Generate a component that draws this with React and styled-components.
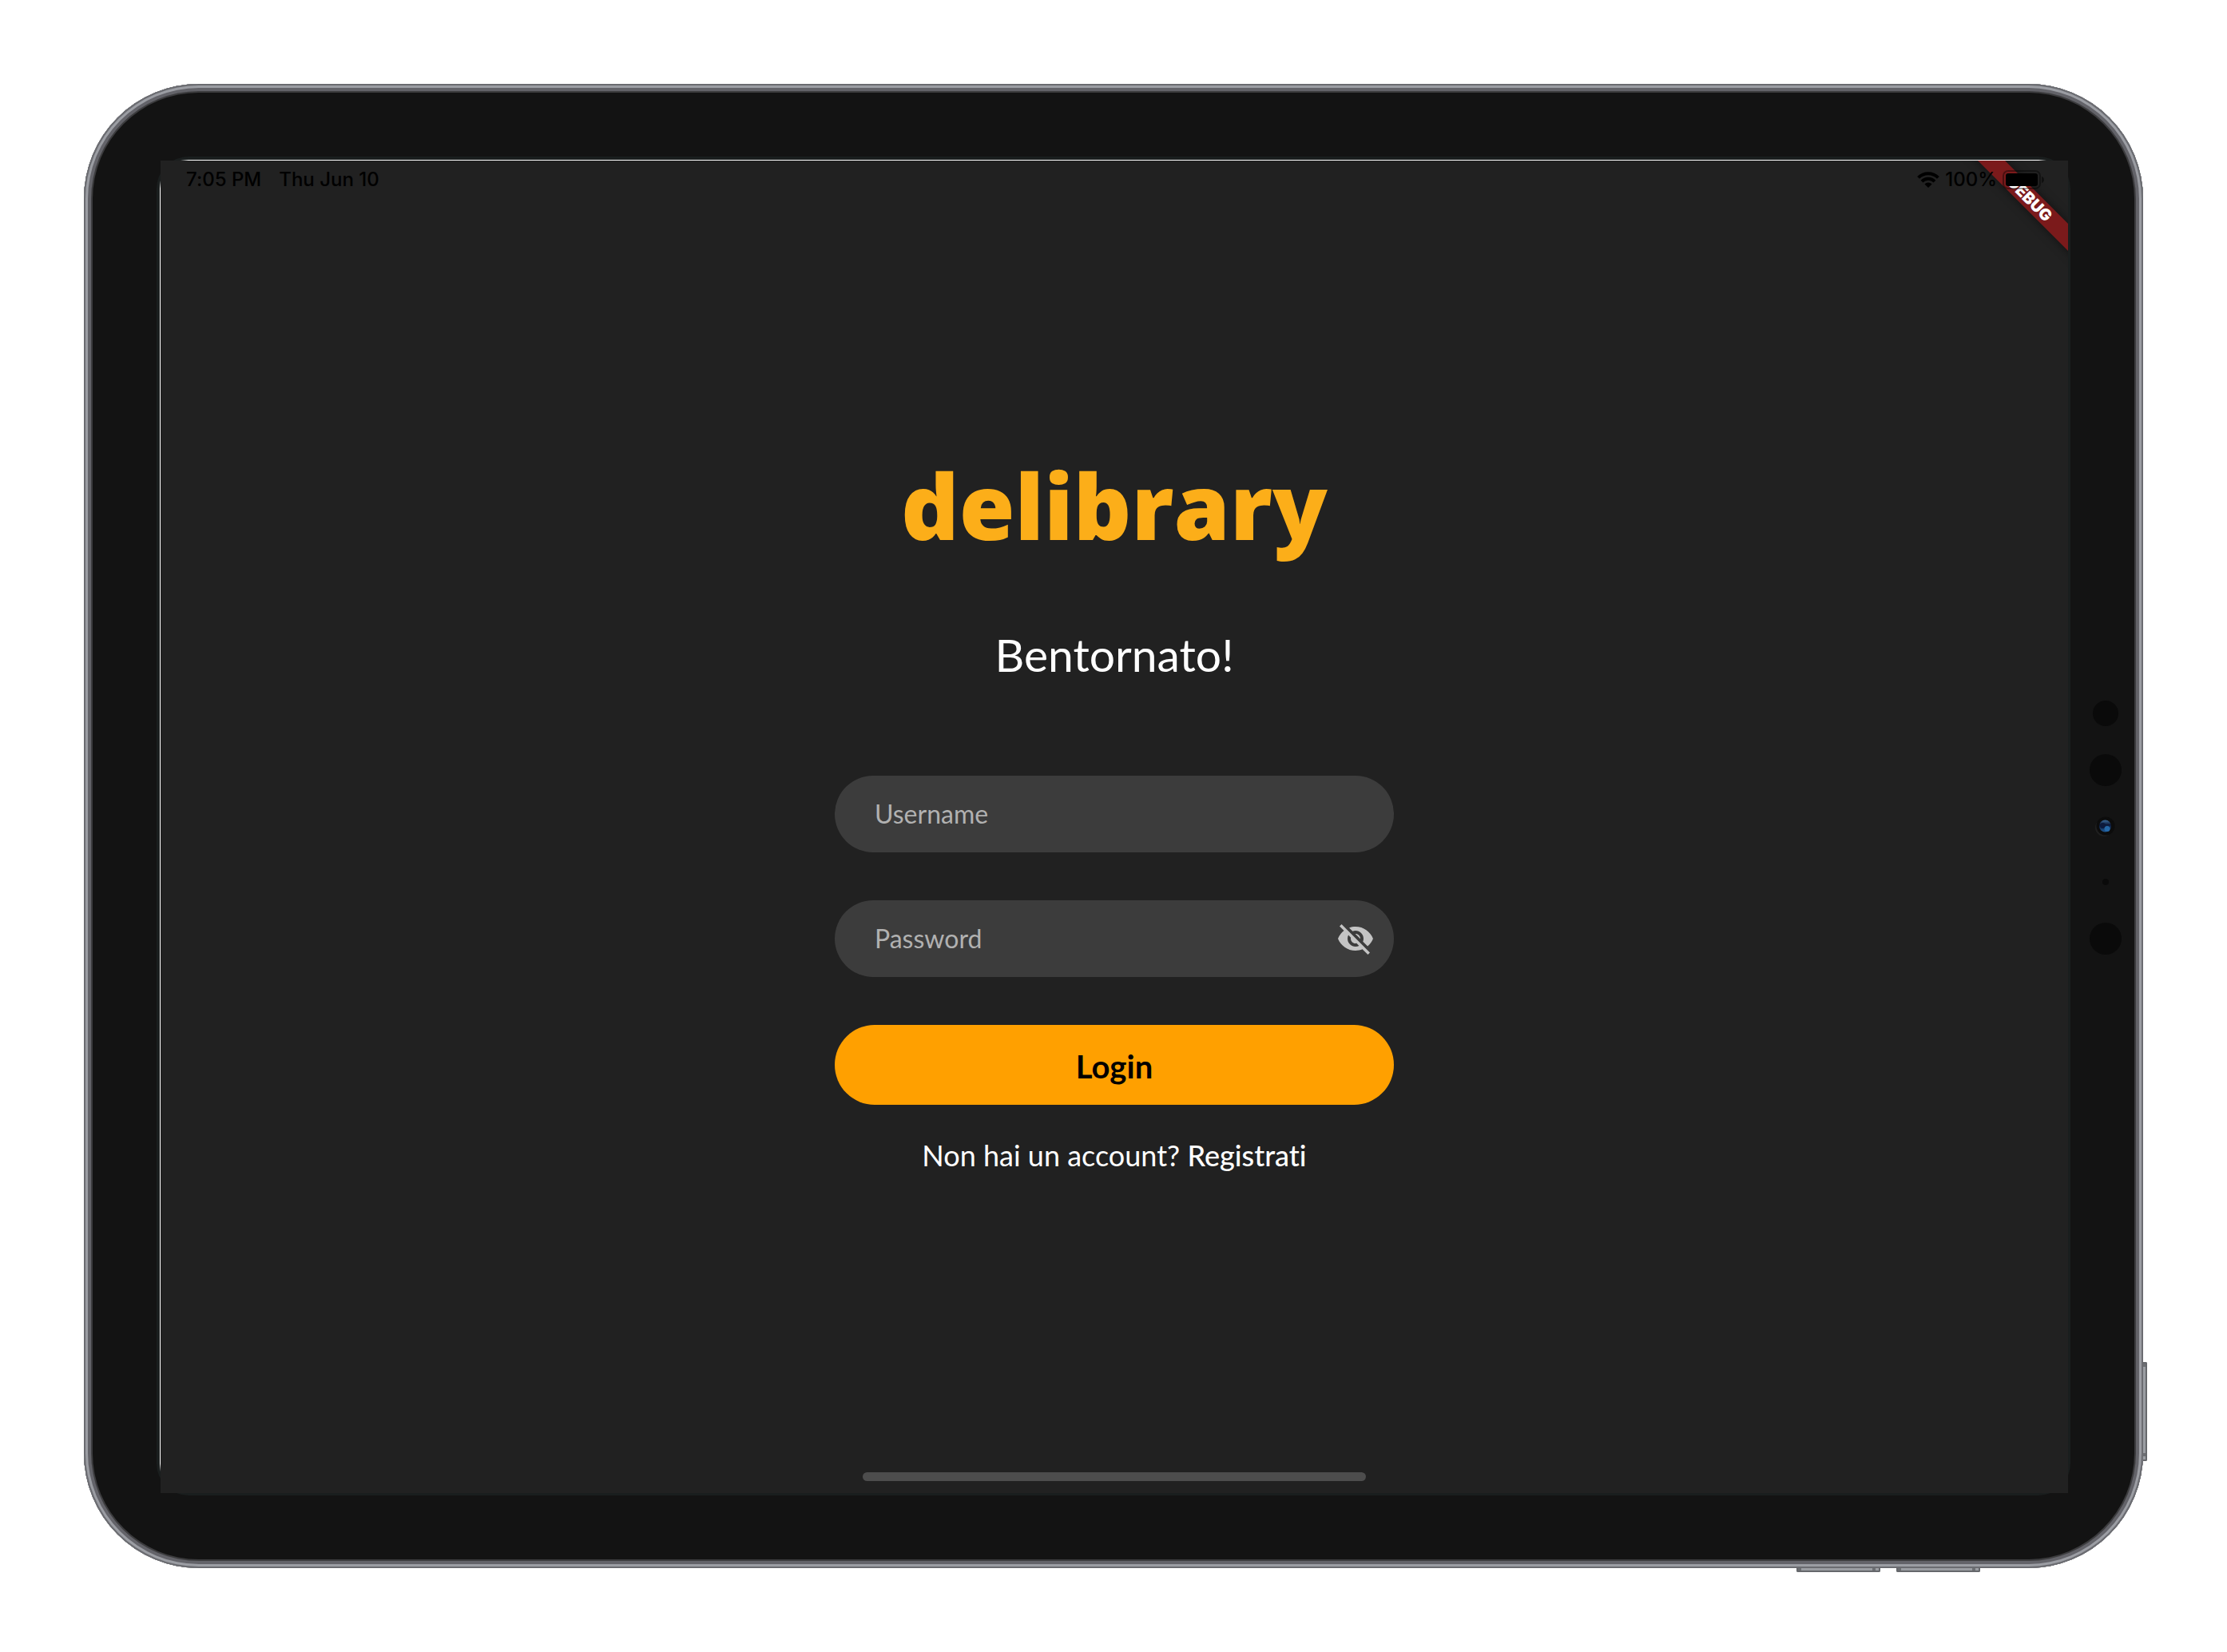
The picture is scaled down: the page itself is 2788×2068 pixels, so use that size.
import React, { useState } from "react";
import styled, { createGlobalStyle } from "styled-components";
import { MdVisibility, MdVisibilityOff } from "react-icons/md";

const GlobalStyle = createGlobalStyle`
  *, *::before, *::after { box-sizing: border-box; }
  body { margin: 0; background: #ffffff; }
  button, input { font: inherit; }
`;

const Page = styled.div`
  min-height: 100vh;
  display: flex;
  padding: 105px;
  font-family: Lato, "Liberation Sans", sans-serif;
  font-variant-ligatures: none;
`;

const Device = styled.div`
  position: relative;
  flex: 1;
  display: flex;
  padding: 91px;
  border-radius: 144px;
  background: #131313;
  box-shadow:
    inset 0 0 0 2px #6b6c71,
    inset 0 0 0 5px #9b9da3,
    inset 0 0 0 9px #636369,
    inset 0 0 0 11px #3c3c3e;
`;

const ScreenRing = styled.div`
  position: relative;
  flex: 1;
  display: flex;
  padding: 5px 3px 3px 5px;
  border-radius: 40px;
  background: #1a1e1e;
`;

const Glint = styled.span`
  position: absolute;
  ${({ $side }) =>
    $side === "top"
      ? `top: 4px; left: 30px; right: 30px; height: 1px;
         background: linear-gradient(90deg, transparent, #ffffff 10px, #ffffff calc(100% - 10px), transparent);`
      : `left: 4px; top: 30px; bottom: 30px; width: 1px;
         background: linear-gradient(transparent, #ffffff 10px, #ffffff calc(100% - 10px), transparent);`}
`;

const Screen = styled.div`
  position: relative;
  flex: 1;
  display: flex;
  flex-direction: column;
  overflow: hidden;
  background: #212121;
`;

const StatusBar = styled.header`
  position: relative;
  z-index: 2;
  display: flex;
  justify-content: space-between;
  align-items: center;
  height: 48px;
  padding: 0 29px 0 32px;
  color: #000000;
  font-family: Inter, "Liberation Sans", sans-serif;
  font-size: 24px;
  font-weight: 500;
  line-height: 32px;
`;

const StatusGroup = styled.div`
  display: flex;
  align-items: center;
  gap: ${({ $gap }) => $gap}px;
`;

const DebugBanner = styled.div`
  position: absolute;
  z-index: 1;
  top: 36px;
  right: -52px;
  width: 200px;
  height: 24px;
  transform: rotate(45deg);
  background: #7b1a1b;
  box-shadow: 0 0 12px rgba(0, 0, 0, 0.5);
  color: #ffffff;
  font-family: Inter, "Liberation Sans", sans-serif;
  font-size: 20px;
  font-weight: 900;
  line-height: 24px;
  text-align: center;
`;

const Main = styled.main`
  flex: 1;
  display: flex;
  flex-direction: column;
  align-items: center;
  justify-content: center;
  padding-bottom: 70px;
`;

const Logo = styled.h1`
  margin: 0;
  color: #fcae19;
  font-family: "Open Sans", "Noto Sans", sans-serif;
  font-size: 113px;
  font-weight: 800;
  line-height: 156px;
`;

const Welcome = styled.h2`
  margin: 75px 0 0;
  color: #ffffff;
  font-size: 57px;
  font-weight: 400;
  line-height: 68px;
`;

const LoginForm = styled.form`
  display: flex;
  flex-direction: column;
  gap: 60px;
  width: 700px;
  max-width: 100%;
  margin-top: 118px;
`;

const Field = styled.div`
  display: flex;
  align-items: center;
  height: 96px;
  padding: 0 24px 0 50px;
  border-radius: 48px;
  background: #3c3c3c;
`;

const TextInput = styled.input`
  flex: 1;
  min-width: 0;
  padding: 0;
  border: 0;
  outline: 0;
  background: transparent;
  color: #ffffff;
  font-size: 32px;
  line-height: 40px;

  &::placeholder {
    color: #b1b1b1;
    opacity: 1;
  }
`;

const IconButton = styled.button`
  display: flex;
  padding: 0;
  border: 0;
  background: none;
  color: #c4c4c4;
  font-size: 48px;
  cursor: pointer;
`;

const SubmitButton = styled.button`
  height: 100px;
  padding: 4px 0 0;
  border: 0;
  border-radius: 50px;
  background: #ffa000;
  color: #000000;
  font-size: 40px;
  font-weight: 700;
  line-height: 48px;
  cursor: pointer;
`;

const SignUp = styled.p`
  margin: 41px 0 0;
  color: #ffffff;
  font-size: 36px;
  line-height: 44px;
`;

const SignUpLink = styled.a`
  color: inherit;
  font-weight: 500;
  text-decoration: none;
`;

const HomeIndicator = styled.div`
  align-self: center;
  width: 630px;
  height: 11px;
  margin-bottom: 15px;
  border-radius: 6px;
  background: #4d4d4d;
`;

const Sensors = styled.div`
  position: absolute;
  top: 0;
  right: 27px;
  bottom: 0;
  display: flex;
  align-items: center;
`;

const SideButton = styled.span`
  position: absolute;
  border: 1px solid #66686c;
  background: #9a9da2;
  ${({ $edge, $offset, $length }) =>
    $edge === "right"
      ? `left: 100%; bottom: ${$offset}px; width: 5px; height: ${$length}px; border-width: 2px 2px 2px 0; border-radius: 0 2px 2px 0;`
      : `top: 100%; right: ${$offset}px; width: ${$length}px; height: 5px; border-width: 0 2px 2px 2px; border-radius: 0 0 2px 2px;`}

  &::before,
  &::after {
    content: "";
    position: absolute;
    background: #6c6e72;
    ${({ $edge }) =>
      $edge === "right" ? "left: 0; right: 0; height: 4px;" : "top: 0; bottom: 0; width: 4px;"}
  }
  &::before {
    ${({ $edge }) => ($edge === "right" ? "top: 0;" : "left: 0;")}
  }
  &::after {
    ${({ $edge }) => ($edge === "right" ? "bottom: 4px;" : "right: 4px;")}
  }
`;

function WifiIcon() {
  return (
    <svg width="28" height="20" viewBox="0 0 28 20" aria-hidden="true">
      <path
        d="M1.600 7.400a17.600 17.600 0 0 1 24.800 0M6 12.100a11.300 11.300 0 0 1 16 0"
        fill="none"
        stroke="#000"
        strokeWidth="4"
      />
      <path d="M14 20l-4.600-4.600a6.600 6.600 0 0 1 9.200 0z" />
    </svg>
  );
}

function BatteryIcon() {
  return (
    <svg width="53" height="24" viewBox="0 0 53 24" aria-hidden="true">
      <rect x="1" y="1" width="46" height="22" rx="6" fill="none" stroke="#000" strokeOpacity="0.4" strokeWidth="2" />
      <rect x="4" y="4" width="40" height="16" rx="3" />
      <path d="M49 8c4 1 4 7 0 8z" fillOpacity="0.5" />
    </svg>
  );
}

function CameraStrip() {
  return (
    <svg width="40" height="324" viewBox="0 0 40 324" aria-hidden="true">
      <defs>
        <linearGradient id="lens" x1="0" y1="0" x2="0" y2="1">
          <stop offset="0" stopColor="#3d6d9c" />
          <stop offset="0.4" stopColor="#0c1838" />
          <stop offset="1" stopColor="#1f5a96" />
        </linearGradient>
      </defs>
      <g fill="#0a0a0a">
        <circle cx="20" cy="21" r="16" />
        <circle cx="20" cy="92" r="20" />
        <circle cx="20" cy="232" r="4" />
        <circle cx="20" cy="303" r="20" />
      </g>
      <circle cx="18" cy="164" r="11" fill="#1f1f1f" />
      <circle cx="20" cy="162" r="11.500" fill="#0c0c0c" />
      <circle cx="19.500" cy="162" r="7.500" fill="url(#lens)" />
      <circle cx="16.500" cy="161.500" r="3.500" fill="#0d1a3c" />
      <circle cx="22" cy="165.500" r="3.500" fill="#2468a8" />
    </svg>
  );
}

export default function App() {
  const [visible, setVisible] = useState(false);

  return (
    <>
      <GlobalStyle />
      <Page>
        <Device>
          <ScreenRing>
            <Glint $side="top" />
            <Glint $side="left" />
            <Screen>
              <StatusBar>
                <StatusGroup $gap={22}>
                  <span>7:05 PM</span>
                  <span>Thu Jun 10</span>
                </StatusGroup>
                <StatusGroup $gap={7}>
                  <WifiIcon />
                  <span>100%</span>
                  <BatteryIcon />
                </StatusGroup>
              </StatusBar>
              <DebugBanner>DEBUG</DebugBanner>
              <Main>
                <Logo>delibrary</Logo>
                <Welcome>Bentornato!</Welcome>
                <LoginForm onSubmit={(event) => event.preventDefault()}>
                  <Field>
                    <TextInput type="text" aria-label="Username" placeholder="Username" />
                  </Field>
                  <Field>
                    <TextInput
                      type={visible ? "text" : "password"}
                      aria-label="Password"
                      placeholder="Password"
                    />
                    <IconButton
                      type="button"
                      aria-label="Mostra password"
                      onClick={() => setVisible(!visible)}
                    >
                      {visible ? <MdVisibility /> : <MdVisibilityOff />}
                    </IconButton>
                  </Field>
                  <SubmitButton type="submit">Login</SubmitButton>
                </LoginForm>
                <SignUp>
                  Non hai un account? <SignUpLink href="#registrati">Registrati</SignUpLink>
                </SignUp>
              </Main>
              <HomeIndicator />
            </Screen>
          </ScreenRing>
          <Sensors>
            <CameraStrip />
          </Sensors>
          <SideButton $edge="right" $offset={134} $length={124} />
          <SideButton $edge="bottom" $offset={329} $length={105} />
          <SideButton $edge="bottom" $offset={204} $length={105} />
        </Device>
      </Page>
    </>
  );
}
